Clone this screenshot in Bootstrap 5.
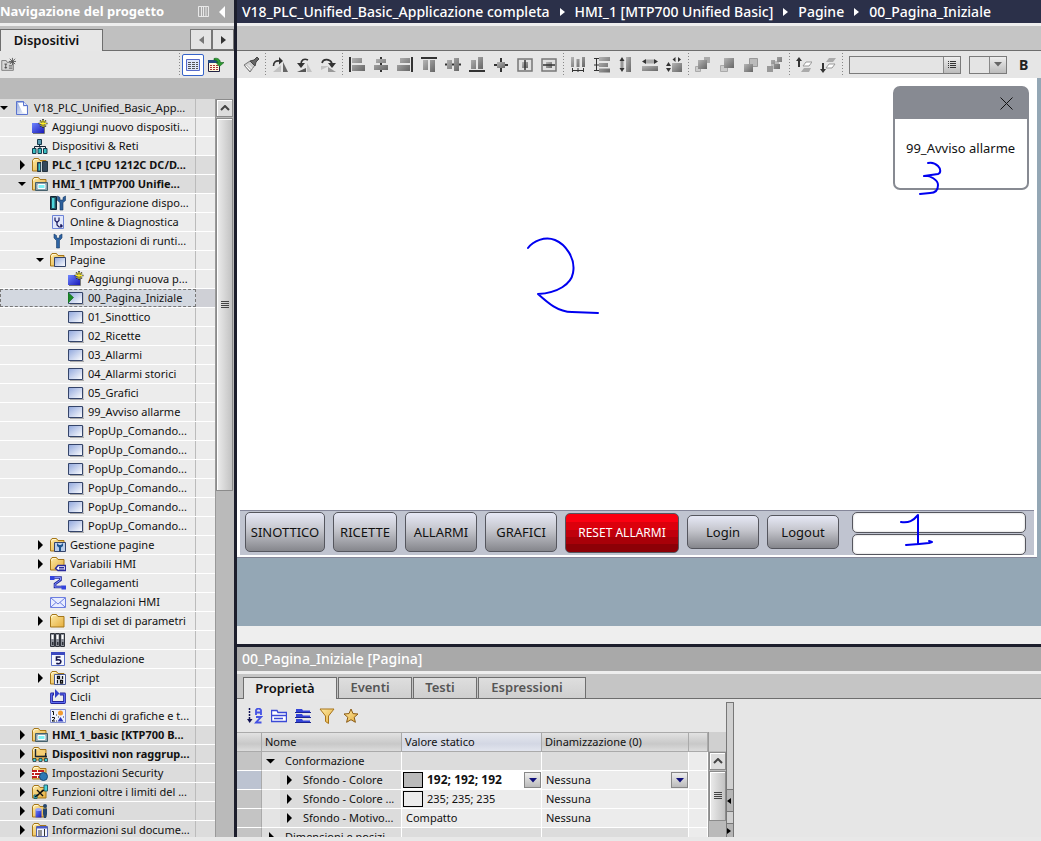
<!DOCTYPE html>
<html lang="it">
<head>
<meta charset="utf-8">
<meta name="viewport" content="width=device-width, initial-scale=1">
<title>V18_PLC_Unified_Basic_Applicazione completa</title>
<link href="https://cdn.jsdelivr.net/npm/bootstrap@5.3.0/dist/css/bootstrap.min.css" rel="stylesheet">
<style>
  body { font-family: "Noto Sans", "Open Sans", sans-serif; font-size: 11px; line-height: 18px; color: #111; background: #e8e8e8; }
  button, input, select { font: inherit; color: inherit; border-radius: 0; }
  a { color: inherit; text-decoration: none; }
  svg { display: block; flex: none; }
  .ico { width: 16px; height: 16px; }
  .app-shell { height: calc(100vh - 4px); }
  .bar-title { height: 23px; line-height: 23px; font-size: 14px; font-weight: 500; background: #a9a9a9; color: #fff; }
  .nav-panel .bar-title { font-size: 13px; font-weight: 700; }
  .bar-path { background: #2b3049; padding: 0 5px; }
  .crumb { margin: 0 10px; }
  .strip { height: 3px; background: #eee; flex: none; }
  .tab-strip { height: 25px; background: #c5c5c5; border-bottom: 1px solid #6e6e6e; flex: none; }
  .tool-strip { height: 27px; background: #e6e6e6; flex: none; }
  .editor-tools { padding-left: 2px; }
  .plain-btn { background: none; border: 0; padding: 0; }

  /* project navigation */
  .nav-panel { width: 237px; border-right: 3px solid #1c1e2c; flex: none; background: #bababa; }
  .nav-panel .tab-strip { background: #c0c0c0; }
  .tab-item { border: 1px solid #6e6e6e; border-bottom: 0; background: linear-gradient(#dedede, #cfcfcf); color: #555; font-size: 13px; font-weight: 600; line-height: 18px; padding: 0 10px 2px 0; text-align: center; }
  .tab-item.on { background: #e7e7e7; color: #111; margin-bottom: -1px; position: relative; }
  .tab-dev { width: 103px; margin-top: 3px; height: 22px; }
  .tab-arrow { width: 22px; height: 21px; margin-top: 3px; border: 1px solid #777; background: #e4e4e4; padding: 0; display: flex; align-items: center; justify-content: center; }
  .dots { width: 5px; align-self: stretch; flex: none; background: repeating-linear-gradient(#888 0 1px, transparent 1px 3px) 2px 0 / 1px 100% no-repeat; margin: 2px 0; }
  .nav-gap { height: 21px; flex: none; }
  .view-on { width: 22px; height: 22px; border: 1px solid #3563c9; border-radius: 2px; background: #fff; padding: 2px; margin-right: 4px; }
  .view-over { margin-right: 10px; }
  .tree-list { min-width: 0; background: #ececec; }
  .tree-row { height: 19px; border-bottom: 1px solid #fff; background: #ececec; white-space: nowrap; }
  .tree-row.dk { background: #dcdcdc; }
  .tree-row.sel { background: #cfd0d6; }
  .tree-row > a { width: 196px; height: 18px; border-right: 1px solid #bbb; display: flex; align-items: center; overflow: hidden; }
  .tree-row.sel > a { background: #d3d8e0; outline: 1px dashed #777; outline-offset: -1px; border-right: 0; }
  .tree-row .ico { margin-right: 4px; }
  .tree-row .l1 { padding-left: 18px; }
  .tree-row .l2 { padding-left: 36px; }
  .tree-row .l3 { padding-left: 54px; }
  .tw { width: 14px; height: 10px; flex: none; }
  .sb { width: 18px; margin-right: 1px; flex: none; background: #bababa; border-left: 1px solid #999; }
  .sb button { display: flex; align-items: center; justify-content: center; width: 17px; border: 1px solid #8b8b8b; padding: 0; box-shadow: inset 1px 1px #fff; }
  .sb-up { height: 18px; background: #ddd; }
  .sb-thumb { margin-top: 1px; background: linear-gradient(90deg, #ececec, #c2c2c2); }

  /* editor */
  .canvas-area { background: #94a7b5; padding: 0 4px 68px 0; min-height: 0; }
  .hmi-screen { background: #fff; border-bottom: 1px solid #85879a; padding: 0 3px 2px; }
  .hmi-bar { height: 45px; background: #c0c4d0; border-top: 1px solid #85879a; padding: 1px 8px 0 5px; gap: 8px; }
  .hmi-btn { height: 40px; border: 1px solid #55565e; border-radius: 5px; font-size: 13px; line-height: 18px; padding: 0; white-space: nowrap; flex: none; background: linear-gradient(#e6e8f6, #c4c5cc 45%, #85868c); }
  .hmi-btn.low { height: 34px; margin-top: 3px; }
  .hmi-btn.red { margin-top: 1px; color: #fff; font-size: 12px; background: linear-gradient(#fa0010 0 22%, #dc000c 22% 42%, #c0000c 42% 60%, #a80008 60% 78%, #8c0006 78%); }
  .w64 { width: 64px; } .w72 { width: 72px; } .w80 { width: 80px; } .w114 { width: 114px; }
  .hmi-fields { margin-left: 5px; min-width: 100px; }
  .hmi-fields input { display: block; width: 100%; height: 21px; border: 1px solid #55565e; border-radius: 5px; background: #fff; margin-bottom: 1px; padding: 0 4px; box-shadow: inset 0 0 2px #bbb; }
  .ink { position: absolute; fill: none; stroke: #0000f0; stroke-width: 2; stroke-linecap: round; stroke-linejoin: round; pointer-events: none; }
  .ink-two { left: 286px; top: 156px; }
  .ink-three { left: 22px; top: 72px; }
  .ink-one { left: 46px; top: 0; }
  .pop { position: absolute; top: 8px; right: 8px; width: 136px; height: 104px; border: 2px solid #878a92; border-radius: 7px; background: #fff; }
  .pop-head { height: 31px; background: #878a92; }
  .pop-x { margin-right: 14px; }
  .pop-text { font-size: 13px; padding: 20px 0 0 11px; white-space: nowrap; }
  .tool { width: 24px; flex: none; padding: 0 4px; }
  .font-box { width: 112px; height: 18px; border: 1px solid #7b7b7b; background: #e4e4e4; }
  .size-box { width: 38px; height: 18px; border: 1px solid #7b7b7b; background: #e4e4e4; }
  .font-box input, .size-box select { border: 0; background: none; min-width: 0; width: 100%; height: 16px; padding: 0; appearance: none; }
  .drop-face { width: 17px; height: 16px; border: 1px solid #888; background: linear-gradient(#eee, #bbb); display: flex; align-items: center; justify-content: center; flex: none; padding: 0; }
  .tool-strip .drop-face { border-width: 0 0 0 1px; }
  .bold-btn { font-size: 14px; font-weight: 700; margin-left: 12px; color: #222; }

  /* properties */
  .gap-band { height: 18px; background: #eee; flex: none; }
  .props { height: 193px; border-top: 3px solid #1c1e2c; flex: none; background: #e6e6e6; overflow: hidden; }
  .props .bar-title { height: 24px; line-height: 24px; padding: 0 5px; }
  .props .tab-item { height: 21px; margin-top: 3px; }
  .props .tab-item.on { height: 22px; }
  .props .tab-item + .tab-item { margin-left: 1px; }
  .tab-first { margin-left: 6px; }
  .w94 { width: 94px; } .w74 { width: 74px; } .w108 { width: 108px; }
  .prop-tools { height: 33px; padding-left: 6px; }
  .prop-tools .tool { height: 16px; }
  .prop-grid { table-layout: fixed; width: 471px; border-collapse: separate; border-spacing: 0; }
  .prop-grid th { height: 20px; padding: 0 0 1px 3px; font-weight: 400; border-right: 1px solid #aaa; border-bottom: 1px solid #aaa; border-top: 1px solid #aaa; background: linear-gradient(#e2e2e2, #c8c8c8 60%, #dcdcdc); line-height: 17px; }
  .prop-grid th.hot { background: linear-gradient(#e6e8ee, #d3d7e4 60%, #e2e5ee); }
  .prop-grid td { height: 19px; padding: 0 0 0 4px; border-right: 1px solid #fff; border-bottom: 1px solid #fff; background: #ececec; line-height: 18px; white-space: nowrap; overflow: hidden; }
  .prop-grid td:first-child { background: #c4c4c4; border-right-color: #aaa; }
  .prop-grid tr.cur td:first-child { background: #bcc3d1; }
  .prop-grid td.nm { background: #dcdcdc; padding: 0; }
  .prop-grid tr.grp td.nm, .prop-grid tr.grp td.blank { background: #dcdcdc; }
  .nm svg { margin: 0 10px 0 4px; width: 9px; }
  .nm .ind { width: 18px; height: 18px; background: #e4e4e4; flex: none; }
  .swatch { width: 20px; height: 16px; border: 1px solid #000; flex: none; margin: 0 4px 0 1px; }
  .cell-in { border: 0; padding: 0; background: none; width: 92px; height: 18px; min-width: 0; appearance: none; font-size: 12px; }
  .dinam { width: 100%; border: 0; padding: 0; background: none; appearance: none; height: 18px; }
  .face-over { position: absolute; right: 0; top: 1px; pointer-events: none; }
  .sb-grid { background: linear-gradient(#d0d0d0 0 19px, #bababa 19px); padding-top: 20px; margin-right: 0; }
  .splitter { width: 8px; border: 1px solid #777; border-bottom: 0; background: #d0d0d0; margin-top: 3px; }
  .split-l, .split-r { width: 6px; border-top: 1px solid #777; background: #b5b5b5; }
  .split-l { height: 23px; border-bottom: 1px solid #777; margin-bottom: 11px; }
  .split-r { height: 14px; }
</style>
</head>
<body>
<svg width="0" height="0" class="position-absolute" aria-hidden="true">
  <defs>
    <linearGradient id="gF" x1="0" y1="0" x2="1" y2="1"><stop offset="0" stop-color="#fdeaa5"/><stop offset="1" stop-color="#e5ad3c"/></linearGradient>
    <linearGradient id="gP" x1="0" y1="0" x2="1" y2="1"><stop offset="0" stop-color="#8fa6dc"/><stop offset="1" stop-color="#fff"/></linearGradient>
    <linearGradient id="gB" x1="0" y1="0" x2="1" y2="1"><stop offset="0" stop-color="#6f86ff"/><stop offset="1" stop-color="#1a1ab8"/></linearGradient>
    <linearGradient id="gG" x1="0" y1="0" x2="1" y2="1"><stop offset="0" stop-color="#b5b5b5"/><stop offset="1" stop-color="#666"/></linearGradient>
  </defs>
  <symbol id="tr" viewBox="0 0 14 10"><path d="M2 0l5 5-5 5z"/></symbol>
  <symbol id="td" viewBox="0 0 14 10"><path d="M0 3h8L4 7z"/></symbol>
  <symbol id="fold" viewBox="0 0 16 16"><path d="M.5 14V3.500L2 1.500h4.500l1.500 2h6V14z" fill="url(#gF)" stroke="#a57618"/><path d="M1.500 5l1-2.500H6" fill="none" stroke="#fff6cf"/></symbol>
  <symbol id="proj" viewBox="0 0 16 16"><path d="M2.500 1.500h7l4 4v9h-11z" fill="url(#gP)" stroke="#5b74cf"/><path d="M4 3h5v3.500h3.500V13l-4-.5z" fill="#fff"/><path d="M9.500 1.500v4h4" fill="#dfe7fb" stroke="#5b74cf"/></symbol>
  <symbol id="add" viewBox="0 0 16 16"><path d="M0 4h9l3 3v7H0z" fill="url(#gB)"/><path d="M1 14.500h11.500V7" fill="none" stroke="#777"/><path d="M11 0v9M6.500 4.500h9M8 1.500l6 6M14 1.500l-6 6" stroke="#333" stroke-width="1.600"/><path d="M11 1v7M7.500 4.500h7M8.500 2l5 5M13.500 2l-5 5" stroke="#ffef2a"/></symbol>
  <symbol id="net" viewBox="0 0 16 16"><path d="M7.500 6v3M2.500 11V8.500h11V11M8 8v3" stroke="#123" fill="none"/><path d="M5.500 1.500h4v5h-4z" fill="#5b9bb0" stroke="#163a4c"/><path d="M.5 10.500h3.500v5H.5zM6 10.500h3.500v5H6zM11.500 10.500H15v5h-3.500z" fill="#39bfc2" stroke="#163a4c"/></symbol>
  <symbol id="plc" viewBox="0 0 16 16"><use href="#fold"/><path d="M5.500 5.500h3.500v9H5.500zM10.500 4.500h5v10h-5z" fill="#34485c" stroke="#263642"/><path d="M7.300 6.500v7" stroke="#39c8cc" stroke-width="1.600"/><path d="M9.500 5v10" stroke="#c8d4da"/></symbol>
  <symbol id="hmi" viewBox="0 0 16 16"><use href="#fold"/><path d="M3.500 6.500h12v8h-12z" fill="#8fa2ac" stroke="#45606c"/><path d="M6 8.500h7v4H6z" fill="#7ff0f4" stroke="#fff"/></symbol>
  <symbol id="conf" viewBox="0 0 16 16"><path d="M.5 1.500h6v13h-6z" fill="#23525e" stroke="#123"/><path d="M2 3h2.500v10H2z" fill="#4fd6dc"/><path d="M7.500 1v4.500l2.500 2V15h3V7.500l2.500-2V1l-2.500 1.500V5h-3V2.500z" fill="#2c5f9c" stroke="#173a66" stroke-width=".6"/></symbol>
  <symbol id="diag" viewBox="0 0 16 16"><path d="M2.500 1.500h11v13h-11z" fill="#e2e8fb" stroke="#6d83d6"/><path d="M5 3.500v3L7 8.500l2-2v-3M7 8.500v2.500l2 2h2v-3" fill="none" stroke="#1a1a60" stroke-width="1.200"/><circle cx="11.500" cy="12" r="1.200" fill="#1a1a60"/></symbol>
  <symbol id="wrench" viewBox="0 0 16 16"><path d="M4 1v4l2.500 2.500V15h3V7.500L12 5V1l-2.500 1.500V5h-3V2.500z" fill="#2e64a4" stroke="#173a66" stroke-width=".6"/></symbol>
  <symbol id="page" viewBox="0 0 16 16"><path d="M2 14.500h14V3" fill="none" stroke="#aaa"/><path d="M.5 2.500h14v11H.5z" fill="url(#gP)" stroke="#34446a"/></symbol>
  <symbol id="start" viewBox="0 0 16 16"><use href="#page"/><path d="M0 2.500l5.500 5L0 13z" fill="#1a8a28" stroke="#0c5c18" stroke-width=".6"/></symbol>
  <symbol id="pages" viewBox="0 0 16 16"><use href="#fold"/><path d="M4.500 5.500h11v9h-11z" fill="url(#gP)" stroke="#34446a"/></symbol>
  <symbol id="gest" viewBox="0 0 16 16"><use href="#fold"/><path d="M4.500 5.500h11v9h-11z" fill="#b9cdea" stroke="#34446a"/><path d="M7 6v3l2 1.500V14h2v-3.500L13 9V6l-2 2H9z" fill="#1e5590"/></symbol>
  <symbol id="vars" viewBox="0 0 16 16"><use href="#fold"/><path d="M5.500 12.500L8 9.500h7.500v5H8z" fill="#fff" stroke="#2a2a9c" stroke-width="1.400"/><path d="M9 11.500h5M9 13h5" stroke="#2a2a9c"/></symbol>
  <symbol id="link" viewBox="0 0 16 16"><path d="M4 2.500h6.500v2.500L5 9v3h7" fill="none" stroke="#222a9a" stroke-width="2.600"/><path d="M4 2.500h6.500v2.500L5 9v3h7" fill="none" stroke="#7e8cff"/><path d="M0 1h4.500v4H0zM11.500 10.500H16v4h-4.500z" fill="#3344dd"/></symbol>
  <symbol id="mail" viewBox="0 0 16 16"><path d="M.5 3.500h15v10H.5z" fill="#e8edff" stroke="#6d7fe0"/><path d="M1 4l7 6 7-6M1 13l5-4.500M15 13l-5-4.500" fill="none" stroke="#6d7fe0"/></symbol>
  <symbol id="arch" viewBox="0 0 16 16"><path d="M.5 1.500h4v13h-4zM5.500 1.500h4v13h-4zM10.500 1.500h4v13h-4z" fill="#8c9099" stroke="#30343c"/><path d="M1.500 3h2v4h-2zM6.500 3h2v4h-2zM11.500 3h2v4h-2z" fill="#fff"/><path d="M2 10h1.500v3H2zM7 10h1.500v3H7zM12 10h1.500v3H12z" fill="#30343c"/></symbol>
  <symbol id="sched" viewBox="0 0 16 16"><path d="M1.500 1.500h13v13h-13z" fill="#f4f7ff" stroke="#5a6fc8"/><path d="M1 1h14v3H1z" fill="#3b49c0"/><path d="M10.500 6h-4v3c4-.8 5 1 4 2.800-.8 1-2.500 1.200-4.200.4" fill="none" stroke="#16164a" stroke-width="1.600"/></symbol>
  <symbol id="script" viewBox="0 0 16 16"><use href="#fold"/><path d="M4.500 4.500h11v10h-11z" fill="#f4f7ff" stroke="#4a5a90"/><path d="M7.500 6.500h2v2h-2zM12.500 6v3M7.500 10v3.500M10.500 10.500h2v2.500h-2z" fill="none" stroke="#111" stroke-width="1.300"/></symbol>
  <symbol id="cyc" viewBox="0 0 16 16"><path d="M4 5H1.500v8.500h13V5H10" fill="none" stroke="#23239a" stroke-width="2.800" stroke-linejoin="round"/><path d="M3 5H1.500v8.500h13V5H9" fill="none" stroke="#5c6cf2" stroke-width="1.200"/><path d="M5 0l4.500 4.500L5 9z" fill="#3540c8"/></symbol>
  <symbol id="list" viewBox="0 0 16 16"><path d="M.5 1.500h15v13H.5z" fill="#eef2ff" stroke="#8390d0"/><path d="M2 3.500h1.500V7M2 9.500h2.500V11L2 13h3" fill="none" stroke="#111"/><path d="M6 7h1M6 13h1M8 9h1M13 9h1" stroke="#333"/><circle cx="10.500" cy="5" r="2.500" fill="#f29b30"/><path d="M7.500 13.500l3-4.500 3 4.500z" fill="#2b36b8"/></symbol>
  <symbol id="ungr" viewBox="0 0 16 16"><use href="#fold"/><path d="M3.500 3v7.500H15M13.500 7v3" fill="none" stroke="#1b2430" stroke-width="1.400"/><path d="M5 5h8v4H5z" fill="#f5ce74"/><path d="M1 12.500h3v3H1zM7 12.500h3v3H7zM12.500 12.500h3v3h-3z" fill="#3fd0d4" stroke="#1b2430" stroke-width=".7"/></symbol>
  <symbol id="sec" viewBox="0 0 16 16"><use href="#fold"/><path d="M0 5h12v8H0z" fill="#fff"/><path d="M0 5h5v2H0zM6 5h6v2H6zM0 8h2v2H0zM3 8h6v2H3zM0 11h5v2H0zM6 11h4v2H6z" fill="#c02020"/><circle cx="11.500" cy="11.500" r="4" fill="#2c78b4" stroke="#174a78"/></symbol>
  <symbol id="func" viewBox="0 0 16 16"><use href="#fold"/><path d="M2 14.500h3V11H2zM12 1h3.500v6H12z" fill="#49d3d8" stroke="#24606e"/><path d="M5 6l6 6M11 6l-6 6M3 13l9-7" stroke="#111" stroke-width="1.400"/></symbol>
  <symbol id="data" viewBox="0 0 16 16"><use href="#fold"/><path d="M3.500 6.500h6v8h-6z" fill="url(#gB)"/><ellipse cx="6.500" cy="6.500" rx="3" ry="1.500" fill="#98a4ff"/><path d="M11 5.500h4V11l-1 4h-2l-1-4z" fill="#25466e"/><circle cx="13" cy="3" r="2" fill="#25466e"/></symbol>
  <symbol id="info" viewBox="0 0 16 16"><use href="#fold"/><path d="M4.500 4.500h11v10h-11z" fill="#f2f5ff" stroke="#5361a8"/><path d="M5 5.500h10" stroke="#4a5ac8" stroke-width="2"/><path d="M6 9h4M6 11h4M6 13h4M12.500 7v7" stroke="#333"/></symbol>
  <symbol id="chu" viewBox="0 0 10 6"><path d="M1 5l4-4 4 4" fill="none" stroke="#444" stroke-width="2"/></symbol>
  <symbol id="grip" viewBox="0 0 8 8"><path d="M0 .5h8M0 2.500h8M0 4.500h8M0 6.500h8" stroke="#444"/></symbol>
  <symbol id="dn" viewBox="0 0 8 5"><path d="M0 0h8L4 4.500z"/></symbol>
</svg>

<div class="app-shell d-flex overflow-hidden">
  <aside class="nav-panel d-flex flex-column">
    <div class="bar-title d-flex align-items-center flex-shrink-0">
      <span class="flex-grow-1 text-nowrap">Navigazione del progetto</span>
      <svg width="12" height="12" viewBox="0 0 12 12" class="me-2"><path d="M.5.5h10v10H.5zM3.500 0v11M5.500 0v11M8 0v11" fill="none" stroke="#e8e8e8"/></svg>
      <svg width="8" height="12" viewBox="0 0 8 12" class="me-2"><path d="M7 0v12L1 6z" fill="#fff"/></svg>
    </div>
    <div class="strip"></div>
    <div class="tab-strip d-flex">
      <button class="tab-item on tab-dev">Dispositivi</button>
      <button class="tab-arrow ms-auto" aria-label="Indietro"><svg width="5" height="8" viewBox="0 0 5 8"><path d="M5 0v8L0 4z" fill="#777"/></svg></button>
      <button class="tab-arrow" aria-label="Avanti"><svg width="5" height="8" viewBox="0 0 5 8"><path d="M0 0v8l5-4z" fill="#333"/></svg></button>
    </div>
    <div class="tool-strip d-flex align-items-center">
      <button class="plain-btn" aria-label="Nuovo gruppo"><svg class="ico ms-0" viewBox="-2 0 18 16"><path d="M0 3h5l1 2h7v9H0z" fill="#d8d8d8" stroke="#777"/><path d="M3 7h3M3 11h3M8 9h4M8 11.500h4M4.500 7v5" stroke="#444" fill="none"/><path d="M12 0v8M8 4h8M9 1l6 6M15 1L9 7" stroke="#555"/></svg></button>
      <span class="dots ms-auto"></span>
      <button class="view-on" aria-label="Dettagli"><svg class="ico" viewBox="0 0 16 16"><path d="M1.500 2.500h13v11h-13z" fill="#dfe6fb" stroke="#5569c8"/><path d="M3 5.500h10M3 7.500h10M3 9.500h10M3 11.500h10" stroke="#555" stroke-dasharray="3 1"/></svg></button>
      <button class="plain-btn view-over" aria-label="Panoramica"><svg class="ico" viewBox="0 0 16 16"><path d="M.5 3.500h11v11H.5z" fill="#fff7dc" stroke="#224"/><path d="M0 3h12v3H0z" fill="#224a80"/><path d="M2 8.500h8M2 10.500h8M2 12.500h8" stroke="#a33" stroke-dasharray="2 1"/><path d="M6 1.500c4-1 6 1 6.500 4H16l-4.500 4L8 5.500h2C9.500 4 8 3 6 3z" fill="#2a9a2f" stroke="#12601a" stroke-width=".6"/></svg></button>
    </div>
    <div class="nav-gap"></div>
    <div class="d-flex flex-grow-1 overflow-hidden">
      <ul class="tree-list list-unstyled m-0 flex-grow-1">
        <li class="tree-row dk"><a href="#"><svg class="tw"><use href="#td"/></svg><svg class="ico"><use href="#proj"/></svg>V18_PLC_Unified_Basic_App...</a></li>
        <li class="tree-row"><a class="l1" href="#"><span class="tw"></span><svg class="ico"><use href="#add"/></svg>Aggiungi nuovo dispositi...</a></li>
        <li class="tree-row"><a class="l1" href="#"><span class="tw"></span><svg class="ico"><use href="#net"/></svg>Dispositivi &amp; Reti</a></li>
        <li class="tree-row dk fw-bold"><a class="l1" href="#"><svg class="tw"><use href="#tr"/></svg><svg class="ico"><use href="#plc"/></svg>PLC_1 [CPU 1212C DC/D...</a></li>
        <li class="tree-row dk fw-bold"><a class="l1" href="#"><svg class="tw"><use href="#td"/></svg><svg class="ico"><use href="#hmi"/></svg>HMI_1 [MTP700 Unifie...</a></li>
        <li class="tree-row"><a class="l2" href="#"><span class="tw"></span><svg class="ico"><use href="#conf"/></svg>Configurazione dispo...</a></li>
        <li class="tree-row"><a class="l2" href="#"><span class="tw"></span><svg class="ico"><use href="#diag"/></svg>Online &amp; Diagnostica</a></li>
        <li class="tree-row"><a class="l2" href="#"><span class="tw"></span><svg class="ico"><use href="#wrench"/></svg>Impostazioni di runti...</a></li>
        <li class="tree-row"><a class="l2" href="#"><svg class="tw"><use href="#td"/></svg><svg class="ico"><use href="#pages"/></svg>Pagine</a></li>
        <li class="tree-row"><a class="l3" href="#"><span class="tw"></span><svg class="ico"><use href="#add"/></svg>Aggiungi nuova p...</a></li>
        <li class="tree-row sel"><a class="l3" href="#" aria-current="page"><span class="tw"></span><svg class="ico"><use href="#start"/></svg>00_Pagina_Iniziale</a></li>
        <li class="tree-row"><a class="l3" href="#"><span class="tw"></span><svg class="ico"><use href="#page"/></svg>01_Sinottico</a></li>
        <li class="tree-row"><a class="l3" href="#"><span class="tw"></span><svg class="ico"><use href="#page"/></svg>02_Ricette</a></li>
        <li class="tree-row"><a class="l3" href="#"><span class="tw"></span><svg class="ico"><use href="#page"/></svg>03_Allarmi</a></li>
        <li class="tree-row"><a class="l3" href="#"><span class="tw"></span><svg class="ico"><use href="#page"/></svg>04_Allarmi storici</a></li>
        <li class="tree-row"><a class="l3" href="#"><span class="tw"></span><svg class="ico"><use href="#page"/></svg>05_Grafici</a></li>
        <li class="tree-row"><a class="l3" href="#"><span class="tw"></span><svg class="ico"><use href="#page"/></svg>99_Avviso allarme</a></li>
        <li class="tree-row"><a class="l3" href="#"><span class="tw"></span><svg class="ico"><use href="#page"/></svg>PopUp_Comando...</a></li>
        <li class="tree-row"><a class="l3" href="#"><span class="tw"></span><svg class="ico"><use href="#page"/></svg>PopUp_Comando...</a></li>
        <li class="tree-row"><a class="l3" href="#"><span class="tw"></span><svg class="ico"><use href="#page"/></svg>PopUp_Comando...</a></li>
        <li class="tree-row"><a class="l3" href="#"><span class="tw"></span><svg class="ico"><use href="#page"/></svg>PopUp_Comando...</a></li>
        <li class="tree-row"><a class="l3" href="#"><span class="tw"></span><svg class="ico"><use href="#page"/></svg>PopUp_Comando...</a></li>
        <li class="tree-row"><a class="l3" href="#"><span class="tw"></span><svg class="ico"><use href="#page"/></svg>PopUp_Comando...</a></li>
        <li class="tree-row"><a class="l2" href="#"><svg class="tw"><use href="#tr"/></svg><svg class="ico"><use href="#gest"/></svg>Gestione pagine</a></li>
        <li class="tree-row"><a class="l2" href="#"><svg class="tw"><use href="#tr"/></svg><svg class="ico"><use href="#vars"/></svg>Variabili HMI</a></li>
        <li class="tree-row"><a class="l2" href="#"><span class="tw"></span><svg class="ico"><use href="#link"/></svg>Collegamenti</a></li>
        <li class="tree-row"><a class="l2" href="#"><span class="tw"></span><svg class="ico"><use href="#mail"/></svg>Segnalazioni HMI</a></li>
        <li class="tree-row"><a class="l2" href="#"><svg class="tw"><use href="#tr"/></svg><svg class="ico"><use href="#fold"/></svg>Tipi di set di parametri</a></li>
        <li class="tree-row"><a class="l2" href="#"><span class="tw"></span><svg class="ico"><use href="#arch"/></svg>Archivi</a></li>
        <li class="tree-row"><a class="l2" href="#"><span class="tw"></span><svg class="ico"><use href="#sched"/></svg>Schedulazione</a></li>
        <li class="tree-row"><a class="l2" href="#"><svg class="tw"><use href="#tr"/></svg><svg class="ico"><use href="#script"/></svg>Script</a></li>
        <li class="tree-row"><a class="l2" href="#"><span class="tw"></span><svg class="ico"><use href="#cyc"/></svg>Cicli</a></li>
        <li class="tree-row"><a class="l2" href="#"><span class="tw"></span><svg class="ico"><use href="#list"/></svg>Elenchi di grafiche e t...</a></li>
        <li class="tree-row dk fw-bold"><a class="l1" href="#"><svg class="tw"><use href="#tr"/></svg><svg class="ico"><use href="#hmi"/></svg>HMI_1_basic [KTP700 B...</a></li>
        <li class="tree-row dk fw-bold"><a class="l1" href="#"><svg class="tw"><use href="#tr"/></svg><svg class="ico"><use href="#ungr"/></svg>Dispositivi non raggrup...</a></li>
        <li class="tree-row dk"><a class="l1" href="#"><svg class="tw"><use href="#tr"/></svg><svg class="ico"><use href="#sec"/></svg>Impostazioni Security</a></li>
        <li class="tree-row dk"><a class="l1" href="#"><svg class="tw"><use href="#tr"/></svg><svg class="ico"><use href="#func"/></svg>Funzioni oltre i limiti del ...</a></li>
        <li class="tree-row dk"><a class="l1" href="#"><svg class="tw"><use href="#tr"/></svg><svg class="ico"><use href="#data"/></svg>Dati comuni</a></li>
        <li class="tree-row dk"><a class="l1" href="#"><svg class="tw"><use href="#tr"/></svg><svg class="ico"><use href="#info"/></svg>Informazioni sul docume...</a></li>
      </ul>
      <div class="sb">
        <button class="sb-up" aria-label="Su"><svg width="10" height="6"><use href="#chu"/></svg></button>
        <button class="sb-thumb" style="height:373px" aria-label="Scorri"><svg width="8" height="8"><use href="#grip"/></svg></button>
      </div>
    </div>
  </aside>

  <main class="d-flex flex-column flex-grow-1 overflow-hidden">
    <nav class="bar-title bar-path d-flex align-items-center flex-shrink-0 text-nowrap">
      <a href="#">V18_PLC_Unified_Basic_Applicazione completa</a>
      <svg width="5" height="8" viewBox="0 0 5 8" class="crumb"><path d="M0 0v8l5-4z" fill="#fff"/></svg>
      <a href="#">HMI_1 [MTP700 Unified Basic]</a>
      <svg width="5" height="8" viewBox="0 0 5 8" class="crumb"><path d="M0 0v8l5-4z" fill="#fff"/></svg>
      <a href="#">Pagine</a>
      <svg width="5" height="8" viewBox="0 0 5 8" class="crumb"><path d="M0 0v8l5-4z" fill="#fff"/></svg>
      <a href="#">00_Pagina_Iniziale</a>
    </nav>
    <div class="strip"></div>
    <div class="tab-strip"></div>
    <div class="tool-strip editor-tools d-flex align-items-center overflow-hidden" role="toolbar">
      <button class="plain-btn tool" aria-label="Copia formato"><svg class="ico" viewBox="0 0 16 16"><path d="M1 8l6-4 5 4-5 7z" fill="#ccc" stroke="#777"/><path d="M3 9l4 4M5 7.500l4 4" stroke="#fff"/><path d="M7 4l4-1 3-3 2 2-3 3-1 4z" fill="#666" stroke="#444"/></svg></button>
      <span class="dots"></span>
      <button class="plain-btn tool" aria-label="Ruota"><svg class="ico" viewBox="0 0 16 16"><path d="M11 5v10h5z" fill="#666"/><path d="M9 8v7H1z" fill="#c2c2c2"/><path d="M1.500 9c0-4 2-5.500 6-5" fill="none" stroke="#333" stroke-width="1.600"/><path d="M7 0l4 4-4 3.500z" fill="#333"/></svg></button>
      <button class="plain-btn tool" aria-label="Ruota a sinistra"><svg class="ico" viewBox="0 0 16 16"><path d="M11 6v9h5z" fill="#c2c2c2"/><path d="M1 15h9v-4z" fill="#555"/><path d="M12 3C8 1 5 3 5 7" fill="none" stroke="#333" stroke-width="1.600"/><path d="M1 6h8l-4 5z" fill="#333"/></svg></button>
      <button class="plain-btn tool" aria-label="Ruota a destra"><svg class="ico" viewBox="0 0 16 16"><path d="M1 9h8l-8 4z" fill="#c2c2c2"/><path d="M8 10l8 5H8z" fill="#999"/><path d="M2 6c1-4 7-5 10 0" fill="none" stroke="#333" stroke-width="1.600"/><path d="M8 6h8l-4 5z" fill="#333"/></svg></button>
      <span class="dots"></span>
      <button class="plain-btn tool" aria-label="Allinea a sinistra"><svg class="ico" viewBox="0 0 16 16"><path d="M1 0v15" stroke="#333" stroke-width="2"/><path d="M3 1h10v5H3zM3 8h13v6H3z" fill="url(#gG)"/></svg></button>
      <button class="plain-btn tool" aria-label="Centra orizzontalmente"><svg class="ico" viewBox="0 0 16 16"><path d="M8 0v15" stroke="#333" stroke-width="2"/><path d="M3 2h10v4H3zM1 8h14v5H1z" fill="url(#gG)"/></svg></button>
      <button class="plain-btn tool" aria-label="Allinea a destra"><svg class="ico" viewBox="0 0 16 16"><path d="M15 0v15" stroke="#333" stroke-width="2"/><path d="M3 1h10v5H3zM0 8h13v6H0z" fill="url(#gG)"/></svg></button>
      <button class="plain-btn tool" aria-label="Allinea in alto"><svg class="ico" viewBox="0 0 16 16"><path d="M0 1h16" stroke="#333" stroke-width="2"/><path d="M2 3h5v10H2zM9 3h5v12H9z" fill="url(#gG)"/></svg></button>
      <button class="plain-btn tool" aria-label="Centra verticalmente"><svg class="ico" viewBox="0 0 16 16"><path d="M0 7.500h16" stroke="#333" stroke-width="2"/><path d="M2 3h5v9H2zM9 1h5v13H9z" fill="url(#gG)"/></svg></button>
      <button class="plain-btn tool" aria-label="Allinea in basso"><svg class="ico" viewBox="0 0 16 16"><path d="M0 14h16" stroke="#333" stroke-width="2"/><path d="M2 3h5v9H2zM9 0h5v12H9z" fill="url(#gG)"/></svg></button>
      <button class="plain-btn tool" aria-label="Centra"><svg class="ico" viewBox="0 0 16 16"><path d="M8 1v14M1 8h14" stroke="#333" stroke-width="2"/><path d="M4 5h8v6H4z" fill="url(#gG)"/></svg></button>
      <button class="plain-btn tool" aria-label="Centra in larghezza"><svg class="ico" viewBox="0 0 16 16"><path d="M1 2h14v12H1z" fill="#e0e0e0" stroke="#777" stroke-width="1.500"/><path d="M5 5h6v6H5z" fill="url(#gG)"/><path d="M8 3v10" stroke="#333" stroke-width="1.500"/></svg></button>
      <button class="plain-btn tool" aria-label="Centra in altezza"><svg class="ico" viewBox="0 0 16 16"><path d="M1 2h14v12H1z" fill="#e0e0e0" stroke="#777" stroke-width="1.500"/><path d="M5 5h6v6H5z" fill="url(#gG)"/><path d="M2 8h12" stroke="#333" stroke-width="1.500"/></svg></button>
      <span class="dots"></span>
      <button class="plain-btn tool" aria-label="Distribuisci in orizzontale"><svg class="ico" viewBox="0 0 16 16"><path d="M1 0h3v10H1zM6.500 2h3v8h-3zM12 0h3v10h-3z" fill="url(#gG)"/><path d="M2.500 11v4M8 11v4M13.500 11v4M2 13.500h12" stroke="#333"/></svg></button>
      <button class="plain-btn tool" aria-label="Distribuisci in verticale"><svg class="ico" viewBox="0 0 16 16"><path d="M5 0h11v4H5zM5 6h9v4H5zM5 11.500h11v4H5z" fill="url(#gG)"/><path d="M0 1.500h5M0 8h5M0 13.500h5M2.500 2v12" stroke="#333"/></svg></button>
      <button class="plain-btn tool" aria-label="Stessa altezza"><svg class="ico" viewBox="0 0 16 16"><path d="M8 0h5v15H8z" fill="url(#gG)"/><path d="M4 4v8" stroke="#999" stroke-width="3"/><path d="M1.500 4L4 0l2.500 4zM1.500 11L4 15l2.500-4z" fill="#333"/></svg></button>
      <button class="plain-btn tool" aria-label="Stessa larghezza"><svg class="ico" viewBox="0 0 16 16"><path d="M0 9h16v5H0z" fill="url(#gG)"/><path d="M4 4.500h8" stroke="#aaa" stroke-width="4"/><path d="M4 2L0 4.500 4 7zM12 2l4 2.500L12 7z" fill="#333"/></svg></button>
      <button class="plain-btn tool" aria-label="Stessa dimensione"><svg class="ico" viewBox="0 0 16 16"><path d="M6 6h10v9H6z" fill="url(#gG)"/><path d="M9.500 0L6.500 2.500l3 2.500zM12 0l3 2.500L12 5zM0 9l2.500-4L5 9zM0 11l2.500 4L5 11z" fill="#333"/></svg></button>
      <span class="dots"></span>
      <button class="plain-btn tool" aria-label="Primo piano"><svg class="ico" viewBox="0 0 16 16"><path d="M9 0h6v6H9z" fill="#aaa"/><path d="M.5 9.500h5v5h-5z" fill="#ccc" stroke="#aaa"/><path d="M3 3h9v9H3z" fill="url(#gG)"/></svg></button>
      <button class="plain-btn tool" aria-label="Avanti di un livello"><svg class="ico" viewBox="0 0 16 16"><path d="M1.500 8.500h7v6h-7z" fill="#ccc" stroke="#aaa"/><path d="M5 1h10v10H5z" fill="url(#gG)"/></svg></button>
      <button class="plain-btn tool" aria-label="Indietro di un livello"><svg class="ico" viewBox="0 0 16 16"><path d="M6.500 1.500h8v8h-8z" fill="#bbb" stroke="#999"/><path d="M1 7h9v8H1z" fill="url(#gG)"/></svg></button>
      <button class="plain-btn tool" aria-label="Sfondo"><svg class="ico" viewBox="0 0 16 16"><path d="M4 4h8v8H4z" fill="#bbb"/><path d="M10 0h5v5h-5zM7 7h6v5H7zM4 3h4v4H4z" fill="url(#gG)"/><path d="M0 9h6v6H0z" fill="#999"/></svg></button>
      <span class="dots"></span>
      <button class="plain-btn tool" aria-label="Livello su"><svg class="ico" viewBox="0 0 16 16"><path d="M3 2v8" stroke="#333" stroke-width="2"/><path d="M0 4l3-4 3 4z" fill="#333"/><path d="M7 9l3-4h6l-3 4z" fill="#fff" stroke="#999"/><path d="M5 15l3-4h7l-2 4z" fill="#aaa"/></svg></button>
      <button class="plain-btn tool" aria-label="Livello giù"><svg class="ico" viewBox="0 0 16 16"><path d="M3 6v8" stroke="#333" stroke-width="2"/><path d="M0 12l3 4 3-4z" fill="#333"/><path d="M6 5l3-4h7l-3 4z" fill="#aaa"/><path d="M6 11l3-4h6l-3 4z" fill="#fff" stroke="#999"/></svg></button>
      <span class="dots"></span>
      <span class="font-box d-flex ms-1 me-2 flex-shrink-0"><input type="text" aria-label="Carattere"><button class="drop-face" aria-label="Scegli carattere"><svg width="9" height="9" viewBox="0 0 9 9"><path d="M0 1.500h1M2 1.500h6M0 3.500h1M2 3.500h6M0 5.500h1M2 5.500h6M0 7.500h1M2 7.500h6" stroke="#333"/></svg></button></span>
      <span class="size-box d-flex flex-shrink-0"><select aria-label="Dimensione"><option></option></select><span class="drop-face"><svg width="8" height="5" fill="#666"><use href="#dn"/></svg></span></span>
      <button class="plain-btn bold-btn" aria-label="Grassetto">B</button>
    </div>

    <div class="canvas-area d-flex flex-grow-1">
      <section class="hmi-screen flex-grow-1 d-flex flex-column position-relative overflow-hidden">
        <div class="flex-grow-1"></div>
        <svg class="ink ink-two" width="84" height="84"><path d="M5 14C10 7 22 2 32 6s21 18 18 33c-2 11-15 20-35 21 10 9 20 18 34 18l26 1"/></svg>
        <div class="pop">
          <div class="pop-head d-flex justify-content-end align-items-center"><button class="plain-btn pop-x" aria-label="Chiudi"><svg width="13" height="13" viewBox="0 0 13 13"><path d="M.5.5l12 12M12.500.5l-12 12" stroke="#111"/></svg></button></div>
          <div class="pop-text">99_Avviso allarme</div>
          <svg class="ink ink-three" width="30" height="38"><path d="M11 3c4-1 8 1 10 3 3 3 3 7 0 8l-14 2c6-1 14 4 14 9 0 6-4 8-8 8l-10 1"/></svg>
        </div>
        <div class="hmi-bar d-flex align-items-start">
          <button class="hmi-btn w80">SINOTTICO</button>
          <button class="hmi-btn w64">RICETTE</button>
          <button class="hmi-btn w72">ALLARMI</button>
          <button class="hmi-btn w72">GRAFICI</button>
          <button class="hmi-btn red w114">RESET ALLARMI</button>
          <button class="hmi-btn low w72">Login</button>
          <button class="hmi-btn low w72">Logout</button>
          <div class="hmi-fields flex-grow-1 position-relative">
            <input type="text" aria-label="Utente"><input type="text" aria-label="Stato">
            <svg class="ink ink-one" width="38" height="38"><path d="M3 10c8 1 12-1 17-7v29M8 33l13-1 10-1 3-1-3-1"/></svg>
          </div>
        </div>
      </section>
    </div>
    <div class="gap-band"></div>

    <section class="props d-flex flex-column">
      <div class="bar-title flex-shrink-0">00_Pagina_Iniziale [Pagina]</div>
      <div class="strip"></div>
      <div class="tab-strip d-flex">
        <button class="tab-item on w94 tab-first">Proprietà</button>
        <button class="tab-item w74">Eventi</button>
        <button class="tab-item w64">Testi</button>
        <button class="tab-item w108">Espressioni</button>
      </div>
      <div class="d-flex flex-grow-1 overflow-hidden">
        <div class="flex-shrink-0">
          <div class="prop-tools d-flex align-items-center">
            <button class="plain-btn tool" aria-label="Ordina"><svg class="ico" viewBox="0 0 16 16"><path d="M2.500 0v12" stroke="#111155" stroke-width="1.500" stroke-dasharray="2 1"/><path d="M0 11h5.500L2.700 15z" fill="#111155"/><path d="M9 7V2l1.500-1.500h2L14 2v5M9 4.500h5M9 9h5l-5 5.500h5.500" fill="none" stroke="#4452e4" stroke-width="1.800"/></svg></button>
            <button class="plain-btn tool" aria-label="Categorie"><svg class="ico" viewBox="0 0 16 16"><path d="M.5 13.500v-11H6L7 4.500h8.500v9z" fill="#fff" stroke="#3a49d6" stroke-width="1.400"/><path d="M0 7.500h16M3 10.500h9" stroke="#3a49d6" stroke-width="1.600"/></svg></button>
            <button class="plain-btn tool" aria-label="Elenco"><svg class="ico" viewBox="0 0 16 16"><path d="M1 1h6l1 1.500h7V4H1zM1 6h6l1 1.500h7V9H1zM1 11h6l1 1.500h7V14H1z" fill="#3444d8"/><path d="M0 4.500h16M0 9.500h16M0 14.500h16" stroke="#1b2590"/></svg></button>
            <button class="plain-btn tool" aria-label="Filtro"><svg class="ico" viewBox="0 0 16 16"><path d="M1 1h14L9.500 8v7.500l-3-2V8z" fill="url(#gF)" stroke="#a8741a"/></svg></button>
            <button class="plain-btn tool" aria-label="Preferiti"><svg class="ico" viewBox="0 0 16 16"><path d="M8 1l2 4.600 5 .4-3.800 3.300 1.200 5L8 11.700l-4.400 2.600 1.200-5L1 6l5-.4z" fill="url(#gF)" stroke="#8a5a14"/></svg></button>
          </div>
          <div class="d-flex">
            <table class="prop-grid">
              <colgroup><col style="width:25px"><col style="width:140px"><col style="width:140px"><col style="width:147px"><col style="width:19px"></colgroup>
              <thead><tr><th></th><th>Nome</th><th class="hot">Valore statico</th><th>Dinamizzazione (0)</th><th></th></tr></thead>
              <tbody>
                <tr class="grp"><td></td><td class="nm"><div class="d-flex align-items-center"><svg height="10" viewBox="0 0 9 10"><path d="M0 3h9L4.500 7.500z"/></svg>Conformazione</div></td><td class="blank"></td><td class="blank"></td><td></td></tr>
                <tr class="cur"><td></td><td class="nm"><div class="d-flex align-items-center"><span class="ind"></span><svg height="10" viewBox="0 0 9 10"><path d="M3 0l5 5-5 5z"/></svg>Sfondo - Colore</div></td>
                  <td class="bg-white p-0"><div class="d-flex align-items-center"><span class="swatch" style="background:#bababa"></span><input class="cell-in fw-bold" aria-label="Sfondo - Colore" value="192; 192; 192"><button class="drop-face ms-auto" aria-label="Scegli colore"><svg width="8" height="5" fill="#10107a"><use href="#dn"/></svg></button></div></td>
                  <td><div class="position-relative"><select class="dinam" aria-label="Dinamizzazione"><option>Nessuna</option></select><span class="drop-face face-over"><svg width="8" height="5" fill="#10107a"><use href="#dn"/></svg></span></div></td><td></td></tr>
                <tr><td></td><td class="nm"><div class="d-flex align-items-center"><span class="ind"></span><svg height="10" viewBox="0 0 9 10"><path d="M3 0l5 5-5 5z"/></svg>Sfondo - Colore ...</div></td><td class="p-0"><div class="d-flex align-items-center"><span class="swatch" style="background:#ebebeb"></span>235; 235; 235</div></td><td>Nessuna</td><td></td></tr>
                <tr><td></td><td class="nm"><div class="d-flex align-items-center"><span class="ind"></span><svg height="10" viewBox="0 0 9 10"><path d="M3 0l5 5-5 5z"/></svg>Sfondo - Motivo...</div></td><td>Compatto</td><td>Nessuna</td><td></td></tr>
                <tr class="grp"><td></td><td class="nm"><div class="d-flex align-items-center"><svg height="10" viewBox="0 0 9 10"><path d="M3 0l5 5-5 5z"/></svg>Dimensioni e posizi...</div></td><td class="blank"></td><td class="blank"></td><td></td></tr>
              </tbody>
            </table>
            <div class="sb sb-grid">
              <button class="sb-up" aria-label="Su"><svg width="10" height="6"><use href="#chu"/></svg></button>
              <button class="sb-thumb" style="height:50px" aria-label="Scorri"><svg width="8" height="8"><use href="#grip"/></svg></button>
            </div>
          </div>
        </div>
        <div class="splitter d-flex flex-column justify-content-end align-items-center">
          <button class="plain-btn split-l" aria-label="Comprimi"><svg width="4" height="6" viewBox="0 0 4 6"><path d="M4 0v6L0 3z"/></svg></button>
          <button class="plain-btn split-r" aria-label="Espandi"><svg width="4" height="6" viewBox="0 0 4 6"><path d="M0 0v6l4-3z"/></svg></button>
        </div>
      </div>
    </section>
  </main>
</div>
<script src="https://cdn.jsdelivr.net/npm/bootstrap@5.3.0/dist/js/bootstrap.bundle.min.js"></script>
</body>
</html>
